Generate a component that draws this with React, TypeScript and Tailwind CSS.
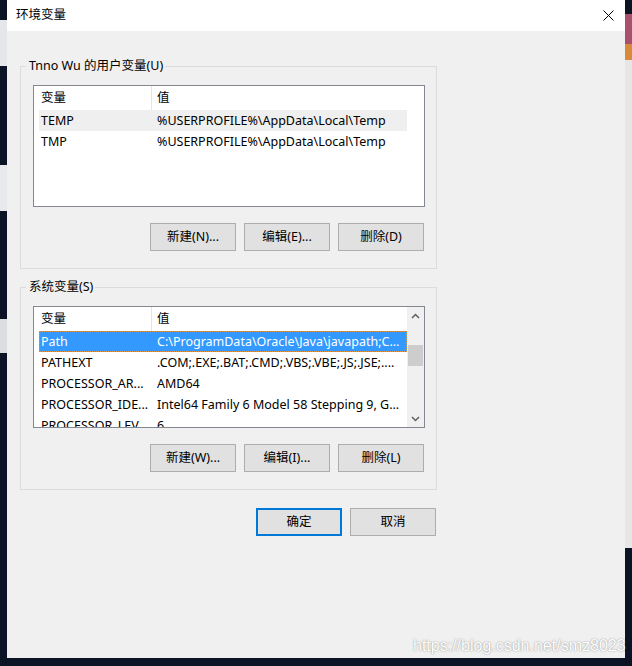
type Row = { name: string; value: string; state?: "selected" | "inactive" };

const userVars: Row[] = [
  { name: "TEMP", value: "%USERPROFILE%\\AppData\\Local\\Temp", state: "inactive" },
  { name: "TMP", value: "%USERPROFILE%\\AppData\\Local\\Temp" },
];

const sysVars: Row[] = [
  { name: "Path", value: "C:\\ProgramData\\Oracle\\Java\\javapath;C...", state: "selected" },
  { name: "PATHEXT", value: ".COM;.EXE;.BAT;.CMD;.VBS;.VBE;.JS;.JSE;...." },
  { name: "PROCESSOR_AR...", value: "AMD64" },
  { name: "PROCESSOR_IDE...", value: "Intel64 Family 6 Model 58 Stepping 9, G..." },
  { name: "PROCESSOR_LEV...", value: "6" },
];

function Chevron({ up }: { up?: boolean }) {
  return (
    <svg width="9" height="6" viewBox="0 0 9 6">
      <polyline
        points={up ? "1,5 4.5,1.5 8,5" : "1,1 4.5,4.5 8,1"}
        fill="none"
        stroke="#606060"
        strokeWidth="1.5"
      />
    </svg>
  );
}

function ScrollBar() {
  return (
    <div className="flex w-[17px] shrink-0 flex-col bg-[#f0f0f0]">
      <div className="flex h-[17px] items-center justify-center">
        <Chevron up />
      </div>
      <div className="flex flex-1 flex-col">
        <div className="mx-px mt-[21px] h-[21px] bg-[#cdcdcd]" />
      </div>
      <div className="flex h-[17px] items-center justify-center">
        <Chevron />
      </div>
    </div>
  );
}

function ListView({ rows, scroll }: { rows: Row[]; scroll?: boolean }) {
  return (
    <div className="flex h-[122px] w-[392px] border border-[#828790] bg-white">
      <div className="flex w-[373px] shrink-0 flex-col overflow-hidden">
        <div className="flex h-[24px] shrink-0 items-center">
          <div className="w-[117px] pl-[7px]">变量</div>
          <div className="h-full w-px bg-[#e5e5e5]" />
          <div className="pl-[5px]">值</div>
        </div>
        {rows.map((r) => (
          <div
            key={r.name}
            className={`ml-[5px] flex h-[21px] shrink-0 items-center whitespace-nowrap pt-px ${
              r.state === "selected"
                ? "bg-[#3399ff] text-white outline-1 outline-dotted outline-[#e0964a] -outline-offset-1"
                : r.state === "inactive"
                ? "bg-[#efefef]"
                : ""
            }`}
          >
            <div className="w-[116px] shrink-0 pl-[2px]">{r.name}</div>
            <div className="pl-[2px]">{r.value}</div>
          </div>
        ))}
      </div>
      {scroll && <ScrollBar />}
    </div>
  );
}

function Btn({ label, primary }: { label: string; primary?: boolean }) {
  return (
    <button
      className={`flex h-[28px] w-[86px] items-center justify-center bg-[#e1e1e1] ${
        primary ? "border-2 border-[#0078d7]" : "border border-[#adadad]"
      }`}
    >
      {label}
    </button>
  );
}

function GroupBox({ title, children }: { title: string; children: React.ReactNode }) {
  return (
    <fieldset className="w-[417px] border border-[#dcdcdc]">
      <legend className="ml-[5px] pl-[3px] pr-[2px] leading-[16px]">{title}</legend>
      <div className="flex flex-col pb-[17px] pl-[12px] pr-[11px] pt-[11px]">{children}</div>
    </fieldset>
  );
}

export default function App() {
  return (
    <div className="relative flex h-[666px] w-[632px] items-start bg-[#0b1424] font-['Segoe_UI','Noto_Sans','Noto_Sans_CJK_SC',sans-serif] text-[12.5px] text-black">
      {/* left: desktop behind the dialog */}
      <div className="flex h-full w-[7px] flex-col">
        <div className="mt-[20px] h-[46px] bg-[#e4e6ea]" />
        <div className="mt-[99px] h-[46px] bg-[#e8e9ec]" />
        <div className="mt-[108px] h-[34px] bg-[#dcdde0]" />
      </div>

      {/* dialog */}
      <div className="flex h-[658px] w-[618px] shrink-0 flex-col bg-[#f0f0f0]">
        <div className="flex h-[31px] shrink-0 items-center justify-between bg-white pl-[9px] pr-[11px]">
          <span>环境变量</span>
          <svg width="11" height="11" viewBox="0 0 11 11">
            <path d="M0.5 0.5 L10.5 10.5 M10.5 0.5 L0.5 10.5" stroke="#000" strokeWidth="1" />
          </svg>
        </div>

        <div className="flex flex-col pl-[13px] pt-[27px]">
          <GroupBox title="Tnno Wu 的用户变量(U)">
            <ListView rows={userVars} />
            <div className="mt-[16px] flex w-[392px] justify-end gap-[8px] pr-px">
              <Btn label="新建(N)..." />
              <Btn label="编辑(E)..." />
              <Btn label="删除(D)" />
            </div>
          </GroupBox>

          <div className="mt-[10px]">
            <GroupBox title="系统变量(S)">
              <ListView rows={sysVars} scroll />
              <div className="mt-[16px] flex w-[392px] justify-end gap-[8px] pr-px">
                <Btn label="新建(W)..." />
                <Btn label="编辑(I)..." />
                <Btn label="删除(L)" />
              </div>
            </GroupBox>
          </div>

          <div className="mt-[18px] flex w-[417px] justify-end gap-[8px] pr-px">
            <Btn label="确定" primary />
            <Btn label="取消" />
          </div>
        </div>
      </div>

      {/* right: window behind the dialog */}
      <div className="flex h-full w-[7px] flex-col">
        <div className="mt-[14px] h-[30px] bg-[#a9506f]" />
        <div className="h-[16px] bg-[#d88a3a]" />
        <div className="h-[488px] bg-[#e6e6e6]" />
      </div>

      {/* watermark */}
      <div className="pointer-events-none absolute left-[413px] top-[636px] font-['Liberation_Sans',sans-serif] text-[16px] leading-[20px] text-white [text-shadow:0_0_1.5px_rgba(0,0,0,0.5)]">
        https://blog.csdn.net/smz8023
      </div>
    </div>
  );
}
